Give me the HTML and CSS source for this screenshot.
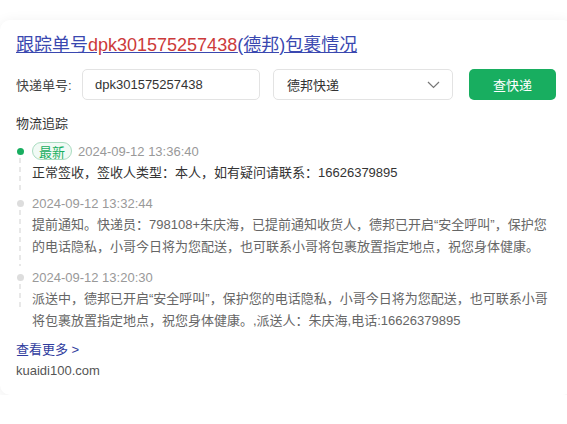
FILE: index.html
```html
<!DOCTYPE html>
<html lang="zh-CN">
<head>
  <meta charset="UTF-8">
  <meta name="viewport" content="width=device-width, initial-scale=1.0">
  <title>快递查询</title>
  <link rel="stylesheet" href="styles.css">
</head>
<body>
  <div class="track-card">
    <h2 class="track-title">
      <a href="#">跟踪单号<span class="num">dpk301575257438</span>(德邦)包裹情况</a>
    </h2>

    <div class="query-row">
      <label class="query-label">快递单号:</label>
      <div class="query-input">dpk301575257438</div>
      <div class="query-select">
        <span>德邦快递</span>
        <svg class="chevron" width="13" height="8" viewBox="0 0 13 8">
          <path d="M1 1 L6.5 6.5 L12 1" fill="none" stroke="#777" stroke-width="1.2"/>
        </svg>
      </div>
      <button class="query-btn">查快递</button>
    </div>

    <div class="section-title">物流追踪</div>

    <div class="timeline">
      <div class="item latest">
        <div class="rail"><span class="dot"></span><span class="line"></span></div>
        <div class="content">
          <div class="time"><span class="badge">最新</span>2024-09-12 13:36:40</div>
          <div class="desc">正常签收，签收人类型：本人，如有疑问请联系：16626379895</div>
        </div>
      </div>
      <div class="item">
        <div class="rail"><span class="dot"></span><span class="line"></span></div>
        <div class="content">
          <div class="time">2024-09-12 13:32:44</div>
          <div class="desc">提前通知。快递员：798108+朱庆海，已提前通知收货人，德邦已开启“安全呼叫”，保护您的电话隐私，小哥今日将为您配送，也可联系小哥将包裹放置指定地点，祝您身体健康。</div>
        </div>
      </div>
      <div class="item">
        <div class="rail"><span class="dot"></span><span class="line"></span></div>
        <div class="content">
          <div class="time">2024-09-12 13:20:30</div>
          <div class="desc">派送中，德邦已开启“安全呼叫”，保护您的电话隐私，小哥今日将为您配送，也可联系小哥将包裹放置指定地点，祝您身体健康。,派送人：朱庆海,电话:16626379895</div>
        </div>
      </div>
    </div>

    <a class="more" href="#">查看更多 &gt;</a>
    <div class="source">kuaidi100.com</div>
  </div>
</body>
</html>
```

FILE: styles.css
```css
* {
  margin: 0;
  padding: 0;
  box-sizing: border-box;
}

body {
  font-family: "Liberation Sans", "Noto Sans CJK SC", Arial, sans-serif;
  background: #ffffff;
  color: #333333;
  font-size: 13px;
  padding-top: 20px;
  overflow: hidden;
}

.track-card {
  width: 572px;
  background: #ffffff;
  border-radius: 10px;
  box-shadow: 0 2px 14px rgba(0, 0, 0, 0.07);
  padding: 13px 16px 14px;
}

.track-title {
  font-size: 18px;
  font-weight: 400;
  line-height: 24px;
}

.track-title a {
  color: #3a48b0;
  text-decoration: underline;
}

.track-title .num {
  color: #cc3a3a;
}

.query-row {
  display: flex;
  align-items: center;
  margin-top: 12px;
  height: 31px;
}

.query-label {
  width: 66px;
  color: #444444;
}

.query-input,
.query-select {
  height: 31px;
  border: 1px solid #e3e3e3;
  border-radius: 5px;
  display: flex;
  align-items: center;
  color: #333333;
}

.query-input {
  width: 178px;
  padding-left: 12px;
}

.query-select {
  width: 180px;
  margin-left: 13px;
  padding: 0 12px 0 13px;
  justify-content: space-between;
}

.query-btn {
  width: 87px;
  height: 31px;
  margin-left: 16px;
  border: none;
  border-radius: 5px;
  background: #18ae60;
  color: #ffffff;
  font-family: inherit;
  font-size: 13px;
}

.section-title {
  margin-top: 13px;
  line-height: 21px;
  color: #333333;
}

.timeline {
  margin-top: 6px;
}

.item {
  display: flex;
  padding-bottom: 8px;
}

.rail {
  width: 8px;
  margin-right: 8px;
  display: flex;
  flex-direction: column;
  align-items: center;
  margin-bottom: -8px;
}

.dot {
  width: 7px;
  height: 7px;
  border-radius: 50%;
  background: #dddddd;
  margin-top: 7.5px;
}

.latest .dot {
  background: #18ae60;
}

.line {
  flex: 1;
  width: 2px;
  margin-top: 3px;
  background: repeating-linear-gradient(to bottom, #e8e8e8 0 5px, transparent 5px 9px);
}

.item:last-child .line {
  flex: none;
  height: 24px;
}

.content {
  flex: 1;
  min-width: 0;
}

.time {
  display: flex;
  align-items: center;
  height: 22px;
  color: #999999;
}

.badge {
  display: inline-flex;
  align-items: center;
  height: 18px;
  padding: 0 6px;
  margin-right: 6px;
  border: 1px solid #a9dcc0;
  border-radius: 9px;
  background: #f1faf5;
  color: #18ae60;
}

.desc {
  line-height: 22px;
  color: #666666;
}

.latest .desc {
  color: #333333;
}

.more {
  display: block;
  margin-top: -1px;
  line-height: 21px;
  color: #2f3c9e;
  text-decoration: none;
}

.source {
  line-height: 21px;
  color: #555555;
}
```
